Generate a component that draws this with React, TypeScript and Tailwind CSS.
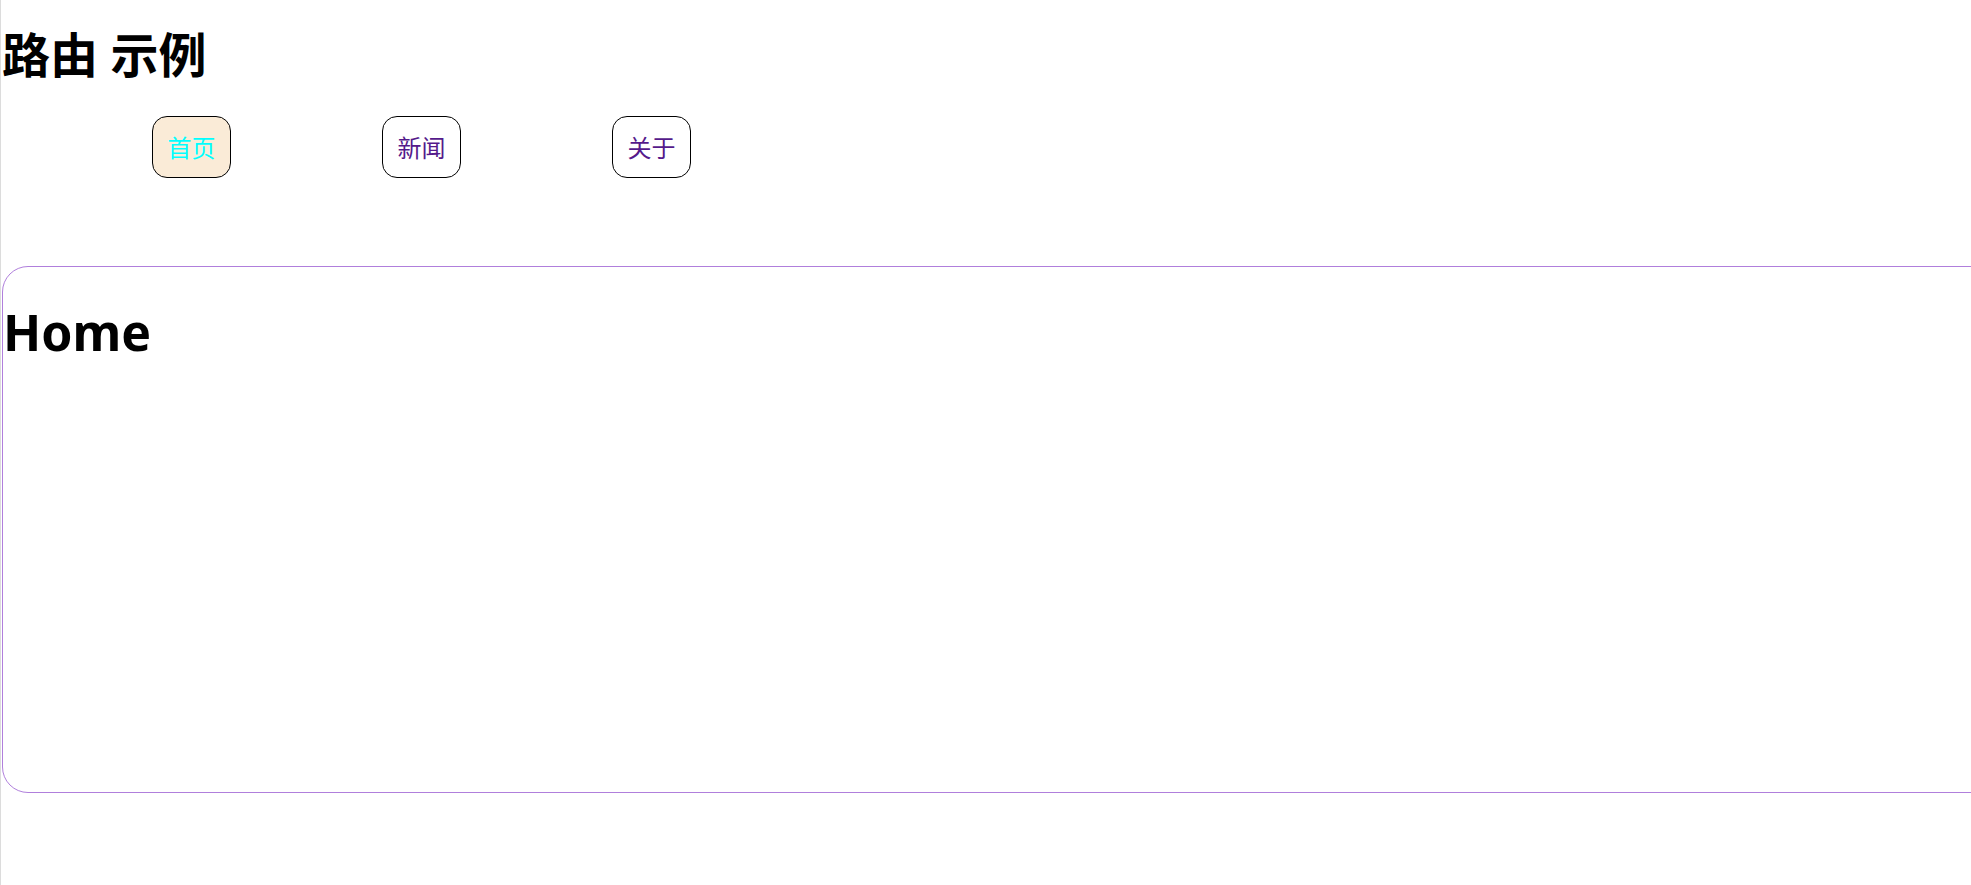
const links = [
  { label: "首页", active: true },
  { label: "新闻", active: false },
  { label: "关于", active: false },
];

export default function App() {
  return (
    <div
      className="min-h-screen overflow-hidden bg-white border-l border-[#dcdcdc]"
      style={{ fontFamily: '"Noto Sans", "Noto Sans CJK SC", sans-serif' }}
    >
      <h1 className="pt-[31px] pl-[1px] text-[48px] leading-none font-bold text-black">路由 示例</h1>

      {/* 导航 */}
      <nav className="flex mt-[37px] pl-[151px] gap-[151px]">
        {links.map((l) => (
          <a
            key={l.label}
            href="#"
            className={`flex items-center justify-center w-[79px] h-[62px] pt-[2px] rounded-[15px] border border-black text-[24px] ${
              l.active ? "bg-[#faebd7] text-[#00ffff]" : "bg-white text-[#551a8b]"
            }`}
          >
            {l.label}
          </a>
        ))}
      </nav>

      {/* 路由出口 */}
      <div className="ml-px mt-[88px] w-[2100px] h-[527px] rounded-[26px] border border-[#b07fdc]">
        <h2 className="mt-[40px] text-[50px] leading-none font-bold text-black">Home</h2>
      </div>
    </div>
  );
}
